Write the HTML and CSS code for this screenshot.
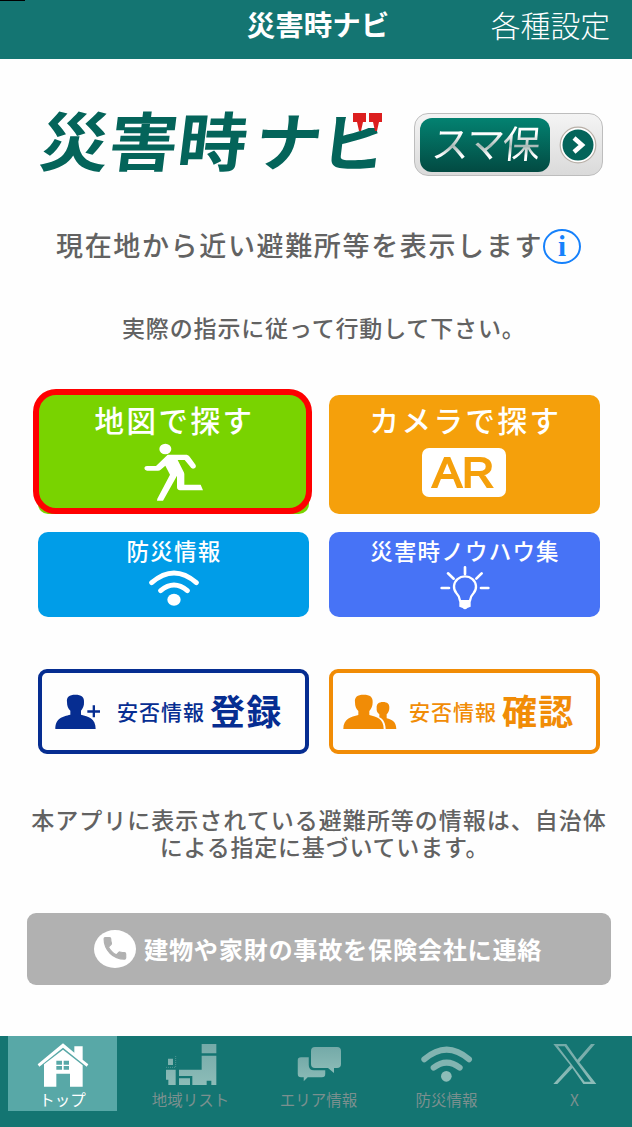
FILE: index.html
```
<!DOCTYPE html>
<html lang="ja">
<head>
  <meta charset="UTF-8" />
  <title>災害時ナビ</title>
  <meta name="viewport" content="width=device-width, initial-scale=1.0" />
  <link rel="stylesheet" href="styles.css">
</head>
<body>
  <header class="header">
    <div class="status-mark"></div>
    <h1 class="header-title">災害時ナビ</h1>
    <a class="header-settings">各種設定</a>
  </header>

  <main class="content">
    <div class="brand">
      <svg class="logo" width="360" height="84" viewBox="38 101 360 84">
        <g class="logo-text" transform="translate(21 0) skewX(-7)">
          <text x="37" y="166" font-size="64" textLength="207" lengthAdjust="spacingAndGlyphs">災害時</text>
          <text x="252" y="166" font-size="64" textLength="134" lengthAdjust="spacingAndGlyphs">ナビ</text>
        </g>
        <path fill="#fefefe" d="M348 104H398V128H348Z" />
        <g fill="#dc1f1f">
          <path d="M353 113h13v9h-3l-2 9h-2l-2-9h-4z" />
          <path d="M369 113h13v9h-3l-2 9h-2l-2-9h-4z" />
        </g>
      </svg>
      <a class="sumaho">
        <span class="sumaho-label"><span class="sumaho-text">スマ保</span></span>
        <svg width="38" height="38" viewBox="0 0 38 38">
          <circle cx="19" cy="19" r="17.8" fill="#fff" stroke="#b9b0a8" stroke-width="1.2" />
          <circle cx="19" cy="19" r="15.500" fill="#04645a" />
          <path d="M15 12l8 7-8 7" fill="none" stroke="#fff" stroke-width="4.5" />
        </svg>
      </a>
    </div>

    <div class="lead">
      <span class="lead-text">現在地から近い避難所等を表示します</span>
      <span class="info">i</span>
    </div>
    <p class="notice">実際の指示に従って行動して下さい。</p>

    <div class="menu">
      <a class="tile tile-map">
        <span class="tile-large">地図で探す</span>
        <svg width="60" height="58" viewBox="354 190 180 174">
          <ellipse cx="418" cy="208" rx="18" ry="16" />
          <path d="M425 225H482Q488 226 491 231L509 256Q512 266 501 267L496 265 476 241H455L472 275Q475 279 475 284V315H524L531 332H462Q453 331 453 323V288L411 363H393L394 357 432 285 418 258 404 270Q401 273 396 273H363Q355 271 355 265 356 259 363 259H390Z" />
        </svg>
        <span class="highlight"></span>
      </a>
      <a class="tile tile-camera">
        <span class="tile-large">カメラで探す</span>
        <span class="ar"><span class="ar-text">AR</span></span>
      </a>
      <a class="tile tile-info">
        <span class="tile-small">防災情報</span>
        <svg width="50" height="40" viewBox="355 125 150 120">
          <path class="line" d="M363 172Q430 114 497 172M390 196Q430 162 470 196" stroke-width="15" />
          <ellipse cx="430" cy="223" rx="20" ry="18" />
        </svg>
      </a>
      <a class="tile tile-knowhow">
        <span class="tile-small">災害時ノウハウ集</span>
        <svg width="50" height="44" viewBox="359 125 150 132" overflow="visible">
          <path class="line" d="M419 226Q417 212 408 203A33 31 0 1 1 460 203Q451 212 449 226" stroke-width="7" />
          <path d="M417 224H451V244L441 248Q434 256 427 248L417 244Z" />
          <path class="line" d="M434 126V146M383 144L400 160M484 144L468 160M364 188H386M482 188H504" stroke-width="8" />
        </svg>
      </a>
    </div>

    <div class="menu safety">
      <a class="outline outline-register">
        <svg class="icon-register" width="46" height="36" viewBox="75 104 138 108">
          <path d="M136 106C154 106 163 112 162 128 163 140 158 148 153 154V166C175 172 197 176 197 209H76C76 176 98 172 121 166V154C114 148 111 140 111 128 109 112 118 106 136 106Z" />
          <path d="M188 138H195V153H210V160H195V174H188V160H172V153H188Z" />
        </svg>
        <span class="outline-small">安否情報</span>
        <span class="outline-large">登録</span>
      </a>
      <a class="outline outline-confirm">
        <svg class="icon-confirm" width="54" height="36" viewBox="68 100 162 108">
          <path d="M130 102C149 102 158 109 157 125 157 137 153 145 147 151V163C169 168 190 175 190 205H69C69 175 92 168 114 163V151C107 145 104 137 104 125 102 109 111 102 130 102Z" />
          <path d="M188 124C201 124 208 130 207 142 207 151 203 157 199 161V173C215 178 227 182 228 205H196C195 188 190 176 177 170V161C171 156 168 151 169 142 168 130 175 124 188 124Z" />
        </svg>
        <span class="outline-small">安否情報</span>
        <span class="outline-large">確認</span>
      </a>
    </div>

    <p class="caption">
      <span>本アプリに表示されている避難所等の情報は、自治体</span>
      <span class="caption-end">による指定に基づいています。</span>
    </p>

    <a class="contact">
      <svg width="42" height="42" viewBox="0 0 42 42">
        <ellipse cx="21" cy="21" rx="21" ry="19" fill="#fff" />
        <path transform="translate(6.5 6) scale(1.2)" fill="#b1b1b1" stroke="#b1b1b1" d="M6.6 10.8c1.4 2.8 3.8 5.1 6.600 6.600l2.200-2.200c.3-.3.7-.4 1-.2 1.100.4 2.300.6 3.600.6.600 0 1 .4 1 1V20c0 .6-.4 1-1 1C10.600 21 3 13.400 3 4c0-.6.4-1 1-1h3.500c.6 0 1 .4 1 1 0 1.300.2 2.500.6 3.600.1.300 0 .7-.2 1z" />
      </svg>
      <span class="contact-text">建物や家財の事故を保険会社に連絡</span>
    </a>
  </main>

  <nav class="tabs">
    <a class="tab selected">
      <svg width="52" height="44" viewBox="113 40 156 132">
        <path d="M115 104L191 41 225 69V50H250V90L267 104 262 111 191 54 120 111Z" />
        <path fill-rule="evenodd" d="M134 104L191 60 250 107V171H212V132H171V171H134ZM171 93V105H188V93ZM193 93V105H209V93ZM171 109V120H188V109ZM193 109V120H209V109Z" />
      </svg>
      <span>トップ</span>
    </a>
    <a class="tab">
      <svg width="52" height="44" viewBox="495 42 156 132">
        <defs>
          <linearGradient id="fade" x1="0" y1="0" x2="0" y2="1">
            <stop offset="0" stop-color="#74aaa8" />
            <stop offset="1" stop-color="#8dbcb8" />
          </linearGradient>
        </defs>
        <path fill="url(#fade)" d="M605 45H649V73H605ZM605 80H649V168H634V155H620V168H577V141H537V122H605ZM537 148H570V168H537ZM498 122H527V168H505V152H498ZM504 89H519V108H504Z" />
        <path d="M527 81V115H497" fill="none" stroke="#6ca4a1" stroke-width="2" stroke-dasharray="3 3" />
      </svg>
      <span>地域リスト</span>
    </a>
    <a class="tab">
      <svg width="46" height="44" viewBox="296 1043 46 44">
        <path fill="url(#fade)" d="M315 1047H337Q341 1047 341 1051V1064Q341 1068 337 1068H334V1073L328 1068H315Q311 1068 311 1064V1051Q311 1047 315 1047Z" />
        <path fill="url(#fade)" stroke="#147572" stroke-width="1.5" d="M301 1056.500H309.500V1065Q309.500 1069.500 314 1069.500H326V1074Q326 1078 322 1078H308L303 1083V1078H301Q297 1078 297 1074V1060Q297 1056.500 301 1056.500Z" />
      </svg>
      <span>エリア情報</span>
    </a>
    <a class="tab">
      <svg width="52" height="44" viewBox="314 41 156 132">
        <path d="M324 90Q391 32 458 90M352 115Q391 85 430 115" fill="none" stroke="#82b4b1" stroke-width="18" stroke-linecap="round" />
        <circle cx="390" cy="141" r="16" fill="#8dbcb8" />
      </svg>
      <span>防災情報</span>
    </a>
    <a class="tab">
      <svg width="44" height="44" viewBox="709 42 132 132">
        <path fill="url(#fade)" fill-rule="evenodd" d="M710 45H749L782 92 823 45H835L788 100 839 165H800L767 117 722 165H710L761 109ZM724 52L804 158H822L744 52Z" />
      </svg>
      <span>X</span>
    </a>
  </nav>
</body>
</html>
```
FILE: styles.css
```
* {
  box-sizing: border-box;
}

html, body {
  margin: 0;
  padding: 0;
  height: 100%;
  overflow: hidden;
}

body {
  display: flex;
  flex-direction: column;
  height: 1127px;
  font-family: "Noto Sans CJK JP", sans-serif;
  background: #fefefe;
  color: #626262;
  white-space: nowrap;
}

svg {
  display: block;
  flex: none;
}

.header {
  position: relative;
  display: grid;
  grid-template-columns: 1fr auto 1fr;
  align-items: center;
  height: 59px;
  padding: 0 22px 12px 26px;
  background: #147572;
  color: #fff;
}

.status-mark {
  position: absolute;
  top: 0;
  left: 0;
  width: 25px;
  height: 1px;
  background: #000;
}

.header-title {
  grid-column: 2;
  margin: 0;
  font-size: 28.500px;
  line-height: 46px;
  font-weight: 700;
}

.header-settings {
  justify-self: end;
  font-size: 29.800px;
  line-height: 46px;
  font-weight: 300;
}

.content {
  flex: 1;
  padding: 52px 21px 0 27px;
}

.brand {
  display: flex;
  align-items: center;
  justify-content: space-between;
  padding: 0 8px 0 11px;
  height: 64px;
}

.logo {
  margin-right: -20px;
}

.logo-text {
  fill: #04645a;
  font-weight: 700;
}

.sumaho {
  display: flex;
  align-items: center;
  justify-content: space-between;
  width: 189px;
  height: 63px;
  margin-top: 3px;
  padding: 0 5px;
  border: 1px solid #bdbdbd;
  border-radius: 14px;
  background: linear-gradient(#f4f4f4, #dadada);
}

.sumaho-label {
  display: flex;
  align-items: center;
  justify-content: center;
  width: 130px;
  height: 54px;
  border-radius: 12px;
  background: linear-gradient(#038271, #024a42);
}

.sumaho-text {
  margin-top: -5px;
  font-size: 38px;
  line-height: 54px;
  font-weight: 400;
  letter-spacing: -2px;
  transform: skewX(-5deg);
  background: linear-gradient(#fff 35%, #a8b8b5 58%, #fff 75%);
  background-clip: text;
  -webkit-background-clip: text;
  color: transparent;
}

.lead {
  display: flex;
  align-items: center;
  height: 40px;
  margin-top: 51px;
  padding-left: 29px;
}

.lead-text {
  padding-bottom: 3px;
  font-size: 27px;
  line-height: 37px;
  font-weight: 500;
  letter-spacing: 1.650px;
}

.info {
  width: 38px;
  height: 35px;
  border: 2px solid #1681fb;
  border-radius: 50%;
  color: #1681fb;
  font-family: "Liberation Serif", serif;
  font-size: 29px;
  line-height: 31px;
  font-weight: 700;
  text-align: center;
}

.notice {
  margin: 45px 0 0 95px;
  font-size: 23px;
  line-height: 32px;
  font-weight: 500;
  letter-spacing: 0.850px;
}

.menu {
  display: grid;
  grid-template-columns: 271px 271px;
  grid-template-rows: 119px 85px;
  gap: 18px 20px;
  margin: 52px 0 0 11px;
}

.tile {
  position: relative;
  display: flex;
  flex-direction: column;
  align-items: center;
  border-radius: 10px;
  color: #fff;
  fill: #fff;
}

.tile-map { background: #79d300; }
.tile-camera { background: #f5a00b; }
.tile-info { background: #009de8; }
.tile-knowhow { background: #4773f6; }

.tile-large {
  height: 48px;
  margin-right: -2px;
  font-size: 29.500px;
  line-height: 48px;
  font-weight: 500;
  letter-spacing: 2.500px;
}

.tile-small {
  height: 35px;
  margin-right: -1px;
  font-size: 22.500px;
  line-height: 37px;
  font-weight: 500;
  letter-spacing: 1.200px;
}

.tile .line {
  fill: none;
  stroke: #fff;
  stroke-linecap: round;
}

.highlight {
  position: absolute;
  top: -6px;
  left: -5px;
  width: 279px;
  height: 125px;
  border: 6px solid #f00;
  border-radius: 23px;
}

.ar {
  display: flex;
  align-items: center;
  justify-content: center;
  width: 84px;
  height: 49px;
  margin: 5px 2px 0 0;
  border-radius: 7px;
  background: #fff;
  color: #f5a00b;
}

.ar-text {
  font-family: "Liberation Sans", sans-serif;
  font-size: 42px;
  line-height: 49px;
  -webkit-text-stroke: 1.800px #f5a00b;
  transform: scaleX(1.060);
}

.safety {
  grid-template-rows: 85px;
  margin-top: 52px;
}

.outline {
  display: flex;
  align-items: center;
  border: 4px solid;
  border-radius: 9px;
  fill: currentColor;
}

.outline-register { color: #062d91; }
.outline-confirm { color: #f18c06; }

.icon-register {
  margin: 0 16px 0 13px;
}

.icon-confirm {
  margin: 0 12px 0 10px;
}

.outline-small {
  padding-bottom: 2px;
  font-size: 21px;
  line-height: 36px;
  letter-spacing: 1px;
  font-weight: 500;
}

.outline-large {
  margin-left: 5px;
  padding-bottom: 3px;
  font-size: 35px;
  line-height: 40px;
  letter-spacing: 1.300px;
  font-weight: 700;
}

.caption {
  display: flex;
  flex-direction: column;
  align-items: center;
  margin: 52px 0 0;
  font-size: 23px;
  line-height: 27px;
  font-weight: 500;
  letter-spacing: 1px;
}

.caption-end {
  padding-left: 11px;
  letter-spacing: 0.800px;
}

.contact {
  display: flex;
  align-items: center;
  height: 72px;
  margin-top: 53px;
  padding-left: 67px;
  border-radius: 9px;
  background: #b1b1b1;
  color: #fff;
}

.contact-text {
  margin-left: 8px;
  padding-bottom: 1px;
  font-size: 24.200px;
  font-weight: 700;
  letter-spacing: 0.700px;
}

.tabs {
  display: flex;
  justify-content: space-between;
  height: 91px;
  padding: 0 3px 16px 8px;
  background: #147572;
  color: #7b908f;
}

.tab {
  display: flex;
  flex-direction: column;
  align-items: center;
  width: 109px;
  padding-top: 7px;
  font-size: 15.500px;
  line-height: 24px;
}

.tab.selected {
  background: #58a8a7;
  color: #fff;
  fill: #fff;
}
```
